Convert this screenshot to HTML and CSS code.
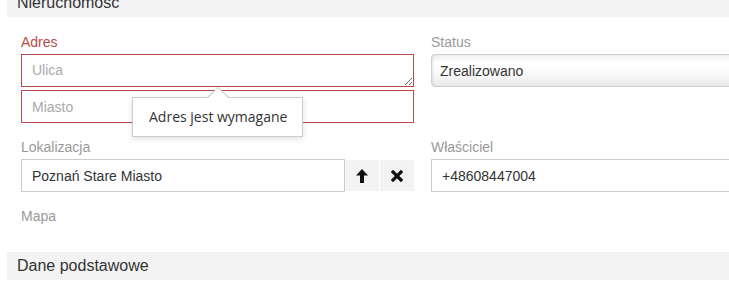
FILE: index.html
```html
<!DOCTYPE html>
<html lang="pl">
<head>
  <meta charset="UTF-8">
  <title>Nieruchomosc</title>
  <link rel="stylesheet" href="styles.css">
</head>
<body>

<div class="page">
  <div class="section-head">Nieruchomosc</div>

  <div class="section-body">
    <div class="row">
      <div class="field has-error">
        <label for="street">Adres</label>
        <textarea id="street" placeholder="Ulica"></textarea>
        <input type="text" id="city" class="gap-top" placeholder="Miasto">
        <div class="tooltip">Adres jest wymagane</div>
      </div>
      <div class="field">
        <label for="status">Status</label>
        <select id="status">
          <option>Zrealizowano</option>
        </select>
      </div>
    </div>

    <div class="row">
      <div class="field">
        <label for="location">Lokalizacja</label>
        <div class="input-group">
          <input type="text" id="location" value="Poznań Stare Miasto">
          <button class="icon-btn" title="Ustaw">
            <svg width="12" height="14" viewBox="0 0 12 14"><path d="M6 0 L12 6.5 L8 6.5 L8 14 L4 14 L4 6.5 L0 6.5 Z" fill="#111"/></svg>
          </button>
          <button class="icon-btn" title="Usuń">
            <svg width="12" height="12" viewBox="0 0 12 12"><path d="M2 2 L10 10 M10 2 L2 10" stroke="#111" stroke-width="3.2" stroke-linecap="square"/></svg>
          </button>
        </div>
      </div>
      <div class="field">
        <label for="owner">Właściciel</label>
        <input type="text" id="owner" value="+48608447004">
      </div>
    </div>

    <div class="row">
      <div class="field">
        <label>Mapa</label>
      </div>
    </div>
  </div>

  <div class="section-head">Dane podstawowe</div>
</div>

</body>
</html>
```

FILE: styles.css
```css
body {
  margin: 0;
  overflow: hidden;
  background: #fff;
  font-family: "Liberation Sans", Arial, sans-serif;
  font-size: 14px;
  color: #333;
}
.page {
  width: 900px;
  margin-top: -11px;
  padding-left: 7px;
}
.section-head {
  height: 28px;
  padding-left: 10px;
  background-color: #f3f3f3;
  font-size: 16px;
  line-height: 28px;
  color: #333;
}
.section-body {
  padding: 16px 14px 25px 14px;
}
.row {
  display: grid;
  grid-template-columns: 393px 393px;
  column-gap: 17px;
  align-items: start;
  margin-bottom: 15px;
}
.row:last-child {
  margin-bottom: 0;
}
.field {
  position: relative;
}
.field label {
  display: block;
  line-height: 18px;
  margin-bottom: 3px;
  color: #999;
}
.row:last-child .field label {
  margin-bottom: 2px;
}
.field input[type="text"],
.field textarea,
.field select {
  display: block;
  width: 100%;
  height: 33px;
  box-sizing: border-box;
  margin: 0;
  padding: 0 10px;
  border: 1px solid #ccc;
  border-radius: 0;
  font-family: inherit;
  font-size: 14px;
  line-height: 20px;
  color: #333;
  background: #fff;
  outline: none;
}
.field textarea {
  padding: 5px 10px 6px;
  resize: vertical;
}
.field ::placeholder {
  color: #aaa;
}
.gap-top {
  margin-top: 3px !important;
}
.has-error label {
  color: #b94a48;
}
.has-error input[type="text"],
.has-error textarea {
  border-color: #b94a48;
}
.field select {
  -webkit-appearance: none;
  appearance: none;
  padding-left: 8px;
  border-color: #d0d0d0;
  border-radius: 4px 0 0 4px;
  background: linear-gradient(to bottom, #f0f0f0 0%, #fff 25%, #fbfbfb 60%, #e9e9e9 100%);
  box-shadow: inset 2px 0 2px rgba(0, 0, 0, 0.06);
}
.input-group {
  display: flex;
  align-items: center;
}
.input-group input[type="text"] {
  flex: 1;
}
.icon-btn {
  width: 34px;
  height: 31px;
  margin: 0 0 0 1px;
  padding: 0;
  border: 0;
  background: #f3f3f3;
  display: flex;
  align-items: center;
  justify-content: center;
  cursor: pointer;
}
.input-group input + .icon-btn {
  margin-left: 0;
}
.tooltip {
  position: absolute;
  left: 111px;
  top: 64px;
  padding: 7px 15px 7px 16px;
  background: #fff;
  border: 1px solid #ccc;
  box-shadow: 0 2px 6px rgba(0, 0, 0, 0.12);
  font-family: "Open Sans", sans-serif;
  font-size: 14px;
  line-height: 24px;
  color: #333;
  white-space: nowrap;
  z-index: 2;
}
.tooltip::before,
.tooltip::after {
  content: "";
  position: absolute;
  left: 74px;
  border: 11px solid transparent;
  border-top: 0;
}
.tooltip::before {
  top: -11px;
  border-bottom: 10px solid #ccc;
}
.tooltip::after {
  top: -10px;
  left: 75px;
  border-width: 0 10px 10px 10px;
  border-bottom-color: #fff;
}
```
